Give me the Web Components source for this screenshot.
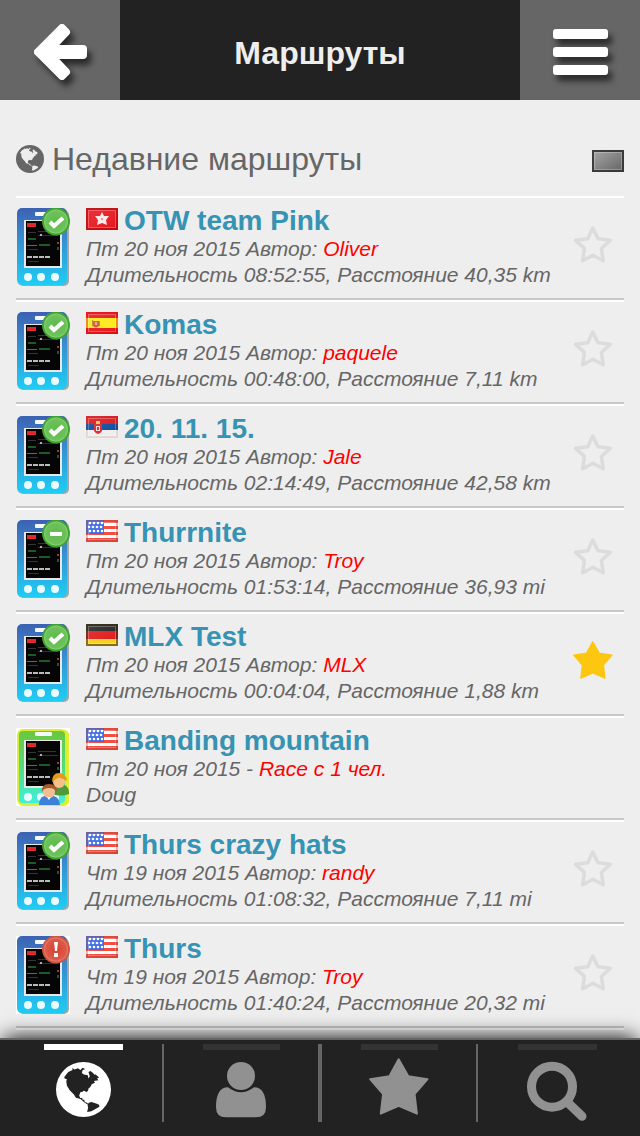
<!DOCTYPE html>
<html lang="ru">
<head>
<meta charset="utf-8">
<meta name="viewport" content="width=device-width, initial-scale=1">
<title>Маршруты</title>
<style>
  html, body { margin: 0; background: #eee; }
  body { font-family: "Liberation Sans", Arial, sans-serif; color: #666; }
</style>
</head>
<body>
<app-shell>
  <app-header slot="header">Маршруты</app-header>
  <section-title>Недавние маршруты</section-title>
  <route-list>
    <route-item device="ok" flag="hk" name="OTW team Pink" date="Пт 20 ноя 2015 Автор:" who="Oliver" info="Длительность 08:52:55, Расстояние 40,35 km" fav="off"></route-item>
    <route-item device="ok" flag="es" name="Komas" date="Пт 20 ноя 2015 Автор:" who="paquele" info="Длительность 00:48:00, Расстояние 7,11 km" fav="off"></route-item>
    <route-item device="ok" flag="rs" name="20. 11. 15." date="Пт 20 ноя 2015 Автор:" who="Jale" info="Длительность 02:14:49, Расстояние 42,58 km" fav="off"></route-item>
    <route-item device="pause" flag="us" name="Thurrnite" date="Пт 20 ноя 2015 Автор:" who="Troy" info="Длительность 01:53:14, Расстояние 36,93 mi" fav="off"></route-item>
    <route-item device="ok" flag="de" name="MLX Test" date="Пт 20 ноя 2015 Автор:" who="MLX" info="Длительность 00:04:04, Расстояние 1,88 km" fav="on"></route-item>
    <route-item device="race" flag="us" name="Banding mountain" date="Пт 20 ноя 2015 -" who="Race с 1 чел." info="Doug"></route-item>
    <route-item device="ok" flag="us" name="Thurs crazy hats" date="Чт 19 ноя 2015 Автор:" who="randy" info="Длительность 01:08:32, Расстояние 7,11 mi" fav="off"></route-item>
    <route-item device="alert" flag="us" name="Thurs" date="Чт 19 ноя 2015 Автор:" who="Troy" info="Длительность 01:40:24, Расстояние 20,32 mi" fav="off"></route-item>
  </route-list>
  <tab-bar slot="footer"></tab-bar>
</app-shell>

<script>
const define = (tag, render) => customElements.define(tag, class extends HTMLElement {
  constructor() { super(); this.attachShadow({ mode: "open" }); }
  connectedCallback() { this.shadowRoot.innerHTML = render(this); }
});

const STAR = "M89 4 118 55 176 64 137 109 144 168 89 144 35 168 42 109 3 64 61 55Z";
const LAND = "M25 45 37 30 50 24 49 18 56 23 66 19 74 24 80 17 88 21 80 25 78 33 84 38 96 40 98 50 102 43 98 30 104 27 112 33 115 38 120 38 130 47 124 50 128 55 114 57 118 62 108 67 103 76 98 80 97 86 92 91 84 90 73 93 70 101 73 109 80 108 79 113 85 114 87 121 96 124 95 128 84 121 74 112 60 108 54 98 42 86 33 72 31 58 33 52 26 50Z";
const GULF = "M73 92 80 90 84 87 91 90 94 96 95 106 91 99 86 92 84 98 81 108 74 107Z";
const SOUTH = "M99 123 107 121 121 125 130 129 131 135 119 142 107 149 94 151 97 137 95 129Z";

define("globe-icon", () => `
  <style>:host{display:block;color:inherit} svg{display:block;width:100%}</style>
  <svg viewBox="0 0 166 166" aria-hidden="true">
    <circle cx="83" cy="83" r="83" fill="currentColor"/>
    <path fill="var(--land)" d="${LAND}"/>
    <path fill="currentColor" d="${GULF}"/>
    <path fill="var(--land)" d="${SOUTH}"/>
  </svg>`);

const usStars = [3, 7, 11].map((y, r) => [4, 8, 12, 16].map(x =>
  `<circle cx="${x + (r === 1 ? -1 : 0)}" cy="${y}" r="1.3" fill="#fff"/>`).join("")).join("");
const FLAGS = {
  hk: `<path fill="#e8141c" d="M0 0h32v22H0z"/><g fill="#fff" fill-opacity=".9"><path d="M16 4l2 4 5 0-3 4 1 5-5-2-5 2 1-5-3-4 5 0z"/></g><circle cx="16" cy="11" r="1" fill="#e8141c" fill-opacity=".6"/>`,
  es: `<path fill="#e8141c" d="M0 0h32v22H0z"/><path fill="#fbe915" d="M0 6h32v10H0z"/><path fill="#cf5a20" d="M7 9h6v5q-3 3-6 0z"/><path fill="#e9a09a" d="M9 10h2v3H9z"/><path fill="#b8862a" d="M6 8h1v6H6zM13 9h1v5h-1z"/>`,
  rs: `<path fill="#d8141c" d="M0 0h32v8H0z"/><path fill="#0a4a9c" d="M0 8h32v6H0z"/><path fill="#eee" d="M0 14h32v8H0z"/><path fill="#d8232a" d="M8 8h8v7q-4 6-8 0z"/><path fill="#f5dcdc" d="M10 10h4v5h-4z"/><path fill="#d8232a" d="M11 11h2v3h-2z"/><path fill="#f3c63a" d="M10 5h4v3h-4z"/>`,
  us: `<path fill="#fff" d="M0 0h32v22H0z"/><path fill="#f04438" d="M0 0h32v3H0zM0 6h32v3H0zM0 12h32v3H0zM0 18h32v4H0z"/><path fill="#2f62e0" d="M0 0h18v14H0z"/>${usStars}`,
  de: `<path fill="#222" d="M0 0h32v8H0z"/><path fill="#e01818" d="M0 7h32v8H0z"/><path fill="#f7cf1c" d="M0 15h32v7H0z"/>`,
  none: `<path fill="url(#g)" d="M0 0h32v22H0z"/>`
};
define("flag-icon", el => {
  const code = el.getAttribute("code");
  const [edge, alpha] = { none: ["#333", .9], us: ["#b0402a", .35], de: ["#3a2f10", .6], rs: ["#900", .1], hk: ["#a00000", .5], es: ["#d00", .4] }[code];
  return `
  <style>:host{display:block;width:32px;height:22px} svg{display:block}</style>
  <svg width="32" height="22" viewBox="0 0 32 22" aria-hidden="true">
    <defs>
      <linearGradient id="g" x2="1" y2="1"><stop stop-color="#999"/><stop offset="1" stop-color="#606060"/></linearGradient>
      <linearGradient id="s" x2="1" y2="1"><stop stop-color="#fff" stop-opacity=".14"/><stop offset="1" stop-color="#fff" stop-opacity="0"/></linearGradient>
    </defs>
    ${FLAGS[code]}
    <path fill="url(#s)" d="M0 0h32v22H0z"/>
    <path fill="none" stroke="#fff" stroke-opacity=".25" d="M2.500 2.500h27v17h-27z"/>
    <path fill="none" stroke="${edge}" stroke-width="2" stroke-opacity="${alpha}" d="M1 1h30v20H1z"/>
  </svg>`;
});

const BADGES = {
  ok: `<circle cx="40" cy="13.500" r="13" fill="url(#ok)" stroke="#3fa32f" stroke-width="2"/><path fill="none" stroke="#fff" stroke-width="4" d="M34 14l4 4 9-8"/>`,
  pause: `<circle cx="40" cy="13.500" r="13" fill="url(#ok)" stroke="#3fa32f" stroke-width="2"/><path fill="#fff" d="M34 12h12v4H34z"/>`,
  alert: `<circle cx="40" cy="13.500" r="13" fill="url(#al)" stroke="#d0553f" stroke-width="2"/><path fill="#fff" d="M38 6h4l-1 9h-2zM38 17h4v4h-4z"/>`,
  race: `<path fill="#4f9a3c" d="M36 66q0-10 8-10t9 8v2q-8 3-17 0z"/><circle cx="43" cy="54" r="6" fill="#f6c08a"/><path fill="#e59a17" d="M36 54q0-9 7-9t8 8q-7-4-9-3t-6 4z"/>
    <path fill="#3c80d8" d="M23 77q0-10 10-10t11 10z"/><circle cx="33" cy="64" r="6" fill="#f3bd93"/><path fill="#a45a2a" d="M26 64q-1-8 7-8t8 8q-2-4-8-4t-7 4z"/><path fill="#fff" d="M31 69h4l-2 3z"/>`
};
define("device-icon", el => {
  const kind = el.getAttribute("kind"), race = kind === "race";
  const back = race || kind === "alert" ? "#fff" : "transparent";
  return `
  <style>:host{display:block;width:54px;height:78px;background:${back}} svg{display:block}</style>
  <svg width="54" height="78" viewBox="0 0 54 78" aria-hidden="true">
    <defs>
      <linearGradient id="b" x2="0" y2="1">${race
        ? `<stop stop-color="#6cc63c"/><stop offset=".5" stop-color="#52dc7c"/><stop offset="1" stop-color="#3ff0e0"/>`
        : `<stop stop-color="#3b62b2"/><stop offset=".25" stop-color="#3c7cc6"/><stop offset="1" stop-color="#1fcdf4"/>`}</linearGradient>
      <radialGradient id="ok"><stop stop-color="#62b84f"/><stop offset=".8" stop-color="#6cc35a"/><stop offset="1" stop-color="#a8dc98"/></radialGradient>
      <radialGradient id="al"><stop stop-color="#d9402f"/><stop offset=".8" stop-color="#dd5a48"/><stop offset="1" stop-color="#f0a090"/></radialGradient>
    </defs>
    <rect x="2" y="2" width="51" height="76" rx="5" fill="${race ? "#e4ee2c" : "#a5a5a5"}"/>
    <rect x="${race ? 2 : 1}" y="${race ? 2 : 0}" width="${race ? 48 : 50}" height="${race ? 74 : 77}" rx="5" fill="url(#b)" ${race ? `stroke="#d8ee30" stroke-width="2"` : ""}/>
    <rect x="19" y="4" width="17" height="4" rx="1" fill="#f4f8ff"/>
    <path fill="#e8e8e8" d="M8 12h38v48H8z"/>
    <path fill="#050505" d="M10 13h34v45H10z"/>
    <path fill="#e02a2a" d="M11 15h9v4h-9z"/>
    <path fill="#333" d="M12 24h8v1h-8zM22 23h18v1H22zM22 27h20v1H22zM12 41h10v1H12zM12 53h11v1H12z"/>
    <path fill="#1f5a26" d="M12 30h8v2h-8zM23 36h11v2H23zM41 39h2v3h-2z"/>
    <path fill="#666" d="M11 37h10v1H11z"/>
    <path stroke="#bbb" stroke-width="2" stroke-dasharray="5 1" d="M11 49h24"/>
    <path fill="#a33" d="M41 34h2v2h-2z"/><path fill="#aab" d="M24 26h2v2h-2z"/>
    <g fill="#e9fbff"><circle cx="12" cy="69" r="4"/><circle cx="25" cy="69" r="4"/><circle cx="39" cy="69" r="4"/></g>
    ${BADGES[kind]}
  </svg>`;
});

define("app-shell", () => `
  <style>
    :host{display:flex;flex-direction:column;min-height:100vh}
    main{padding:0 16px;flex:1}
    ::slotted([slot=footer]){position:sticky;bottom:0}
  </style>
  <slot name="header"></slot><main><slot></slot></main><slot name="footer"></slot>`);

define("app-header", () => `
  <style>
    :host{display:block}
    header{display:grid;grid-template-columns:120px 1fr 120px;height:100px;background:#222;color:#eee}
    h1{margin:0;font-size:32px;line-height:36px;align-self:center;text-align:center;padding-top:6px}
    button{border:0;padding:4px 0 0;background:#666;display:grid;place-items:center}
    svg{display:block;overflow:visible;filter:drop-shadow(4px 6px 3px rgba(0,0,0,.6))}
  </style>
  <header>
    <button type="button" aria-label="Назад"><svg width="52" height="56" viewBox="0 0 52 56">
      <path fill="#fff" stroke="#fff" stroke-width="8" stroke-linejoin="round" d="M4 28 28 4 32 8 16 25H49V31H16L32 48 28 52Z"/>
    </svg></button>
    <h1><slot></slot></h1>
    <button type="button" aria-label="Меню"><svg width="55" height="46" viewBox="0 0 55 46" fill="#fff">
      <rect width="55" height="10" rx="3"/><rect y="18" width="55" height="10" rx="3"/><rect y="36" width="55" height="10" rx="3"/>
    </svg></button>
  </header>`);

define("section-title", () => `
  <style>
    :host{display:flex;align-items:center;gap:8px;padding:41px 0 19px;--land:#eee}
    globe-icon{width:28px}
    h2{margin:0;flex:1;font-size:32px;line-height:36px;font-weight:400}
    button{border:0;padding:4px 0 0;background:none}
  </style>
  <globe-icon></globe-icon><h2><slot></slot></h2>
  <button type="button" aria-label="Фильтр по стране"><flag-icon code="none"></flag-icon></button>`);

define("route-list", () => `<style>:host{display:block;border-bottom:2px solid #fff}</style><slot></slot>`);

define("route-item", el => {
  const a = n => el.getAttribute(n), fav = a("fav");
  const star = fav === "on"
    ? `<path fill="#fdc60f" stroke="#fdc60f" stroke-width="6" stroke-linejoin="round" d="${STAR}"/>`
    : `<path fill="none" stroke="#dcdcdc" stroke-width="16" stroke-linejoin="round" d="M89 14 113 62 168 69 128 107 136 162 89 137 43 162 51 107 11 69 66 62Z"/>`;
  return `
  <style>
    :host{display:block;border-top:2px solid #fff;border-bottom:2px solid #c8c8c8}
    article{display:grid;grid-template-columns:54px 1fr 40px;align-items:start;column-gap:16px;padding:8px 11px 10px 0}
    device-icon{margin-top:2px}
    .text{white-space:nowrap;min-width:0}
    .head{display:flex;gap:6px}
    flag-icon{margin-top:2px}
    h3{margin:0;font-size:28px;line-height:30px}
    h3 a{color:#3693b3}
    p{margin:0;font-size:21px;line-height:26px;font-style:italic}
    a{text-decoration:none;color:#f00}
    button{border:0;padding:0;background:none;margin-top:19px}
    svg{display:block}
  </style>
  <article>
    <device-icon kind="${a("device")}"></device-icon>
    <div class="text">
      <div class="head"><flag-icon code="${a("flag")}"></flag-icon><h3><a href="#">${a("name")}</a></h3></div>
      <p>${a("date")} <a href="#">${a("who")}</a></p>
      <p>${a("info")}</p>
    </div>
    ${fav ? `<button type="button" aria-label="В избранное" aria-pressed="${fav === "on"}"><svg width="40" height="38" viewBox="0 0 180 172">${star}</svg></button>` : ""}
  </article>`;
});

define("tab-bar", () => `
  <style>
    :host{display:block;background:#222;border-top:2px solid #666;box-shadow:0 -4px 20px -4px #000}
    nav{display:grid;grid-template-columns:repeat(4,1fr);padding:4px 4px 14px}
    a{display:flex;flex-direction:column;align-items:center;gap:8px;height:78px;color:#919191;border:solid #666;border-width:0}
    a:nth-child(2){border-width:0 2px}
    a:nth-child(3){border-width:0 2px}
    a::before{content:"";width:50%;height:6px;background:#333}
    a[aria-current]{color:#fff;--land:#222}
    a[aria-current]::before{background:#fff}
    globe-icon{width:55px;margin-top:4px}
    svg{display:block}
  </style>
  <nav>
    <a href="#" aria-current="page" aria-label="Маршруты"><globe-icon></globe-icon></a>
    <a href="#" aria-label="Профиль"><svg width="50" height="64" viewBox="0 0 150 192" fill="currentColor">
      <circle cx="75" cy="54" r="42"/>
      <path d="M36 88Q75 118 114 88 150 88 150 148 150 178 120 178H30Q0 178 0 148 0 88 36 88Z"/></svg></a>
    <a href="#" aria-label="Избранное"><svg width="60" height="57" viewBox="0 0 180 172"><path fill="currentColor" stroke="currentColor" stroke-width="6" stroke-linejoin="round" d="${STAR}"/></svg></a>
    <a href="#" aria-label="Поиск"><svg width="60" height="64" viewBox="0 0 180 192" fill="none" stroke="currentColor" stroke-linecap="round">
      <circle cx="75" cy="86" r="61.500" stroke-width="27"/><path stroke-width="27" d="M126 137 165 175"/></svg></a>
  </nav>`);
</script>
</body>
</html>
